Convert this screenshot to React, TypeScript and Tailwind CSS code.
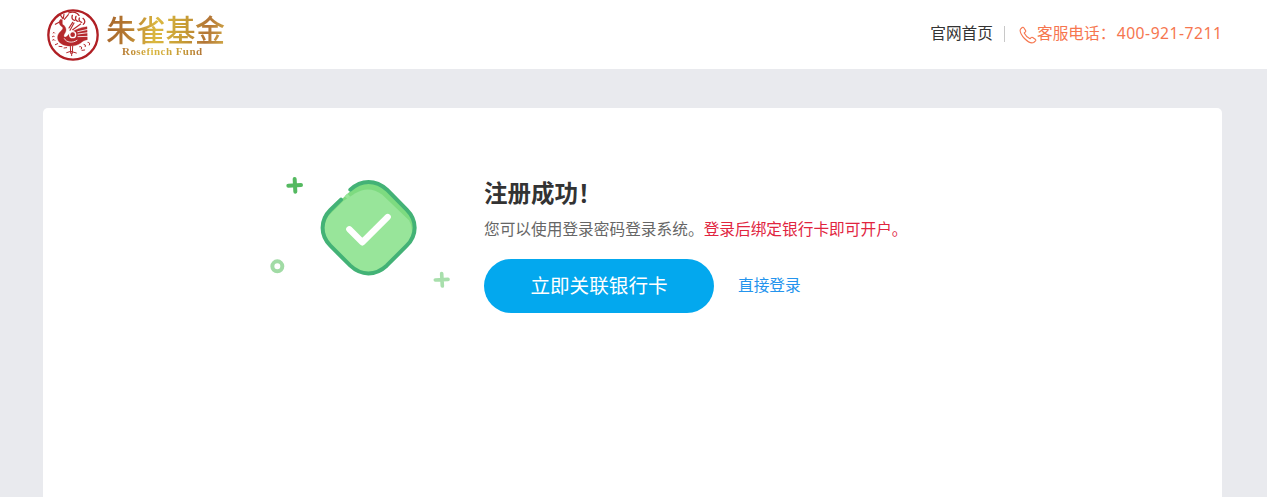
import React from 'react';

function Emblem() {
  return (
    <svg className="h-[62px] w-[64px] shrink-0" viewBox="0 0 192 186" fill="none" stroke="#b5282c" strokeLinecap="round" strokeLinejoin="round">
      <circle cx="99" cy="93" r="74" stroke="#b01f24" strokeWidth="7" />
      <path d="M62 46 C54 52 58 64 66 68 C73 73 64 79 58 86 C49 97 52 113 65 120 C80 129 108 128 122 117 C129 111 133 108 142 107 L141 68 C121 70 108 76 95 84 C87 88 83 98 77 99 C70 101 70 94 75 87 C82 76 76 67 67 60 L67 47 Z" fill="#b5282c" strokeWidth="1" />
      <circle cx="98" cy="92" r="9" stroke="#fff" strokeWidth="4" />
      <path d="M113 83 L144 76 M114 90 L144 86 M114 98 L144 97 M73 104 C79 116 98 118 111 109" stroke="#fff" strokeWidth="2.5" />
      <path d="M90 79 L102 57 M98 77 L122 60 M87 72 L98 55" strokeWidth="3.5" />
      <path d="M60 53 L46 61 M68 43 L60 31 M70 43 L72 30 M73 46 L85 32" strokeWidth="3.5" />
      <path d="M86 27 C99 21 112 26 117 34 M97 34 C94 42 97 48 104 49 M108 37 C104 45 108 51 114 52 M118 42 C115 49 120 54 125 55 M129 43 C136 49 136 56 130 61" strokeWidth="4" />
      <path d="M91 126 L92 148 M98 126 L97 148 M80 146 L92 142 L109 147 M95 147 V155" strokeWidth="3" />
      <path d="M39 87 q3 -5 5 0 M37 98 q4 -5 6 0 M38 108 q5 -4 7 1 M46 122 l7 -3 M57 127 l9 1 M72 132 l8 -1" strokeWidth="3" />
      <path d="M119 128 q9 -2 5 7 M132 121 q7 0 4 7 M144 115 q8 0 4 8 M126 139 l8 -1" strokeWidth="3" />
    </svg>
  );
}

function Logo() {
  return (
    <div className="flex h-[69px] items-center">
      <Emblem />
      <div className="ml-[2px] flex flex-col bg-[linear-gradient(100deg,#a6642b_0%,#b47730_18%,#dbb840_42%,#c69b35_65%,#b37536_82%,#d3ad47_100%)] bg-clip-text pt-px text-transparent">
        <span className="h-[32px] whitespace-nowrap font-['Noto_Sans_CJK_SC',sans-serif] text-[30px] font-medium leading-[30px] tracking-[-0.3px]">朱雀基金</span>
        <span className="h-[12px] whitespace-nowrap pl-[16px] font-['Liberation_Serif',serif] text-[11px] font-bold leading-[12px] tracking-[0.45px]">Rosefinch Fund</span>
      </div>
    </div>
  );
}

function SuccessArt() {
  return (
    <svg className="h-[135px] w-[200px] shrink-0" viewBox="0 0 600 405" fill="none" strokeLinecap="round" strokeLinejoin="round">
      <path d="M280 70 Q326 34 373 68 L447 141 Q480 189 447 238 L374 311 Q326 342 279 311 L205 237 Q173 189 205 141 Z" fill="#7edb80" />
      <path d="M250 108 L286 85 Q326 60 367 89 L447 166 Q466 196 444 238 L374 311 Q326 342 279 311 L205 237 Q180 200 204 154 Z" fill="#98e59a" />
      <path d="M271 74 C304 43 347 43 381 74 L440 134 C472 166 472 210 440 242 L380 302 C346 333 304 333 271 302 L211 242 C180 210 180 166 211 135 L243 104" stroke="#43b276" strokeWidth="12" />
      <path d="M258 98 L266 90" stroke="#98e59a" strokeWidth="12" strokeLinecap="butt" />
      <path d="M268 193 L307 232 L383 156" stroke="#fff" strokeWidth="19" />
      <path d="M104 42 L106 80 M85 62 L123 60" stroke="#54b960" strokeWidth="12" />
      <circle cx="52" cy="304" r="15" stroke="#a1dba5" strokeWidth="12" />
      <path d="M545 326 L547 363 M526 345 L564 343" stroke="#a8dfac" strokeWidth="11" />
    </svg>
  );
}

function PhoneIcon() {
  return (
    <svg className="mt-[4px] h-[18px] w-[18px] shrink-0" viewBox="0 0 18 18" fill="none" stroke="#f6764f" strokeWidth="1.1" strokeLinejoin="round">
      <path d="M3.2 1.5 1.5 3.2C.1 5.4 3 10 5.5 12.5 8 15 12.2 17.8 14.7 16.5L16.5 14.8C17 14.2 16.8 13.7 16.2 13.2L13.7 11.5C13.1 11.1 12.6 11.1 12.1 11.6L11 12.8C8.7 11.7 6.4 9.4 5.2 7L6.4 5.9C6.9 5.4 6.9 5 6.5 4.4L4.8 1.8C4.3 1.1 3.8 1 3.2 1.5Z" />
    </svg>
  );
}

export default function App() {
  return (
    <div className="flex h-[497px] flex-col overflow-hidden bg-[#e9eaee] font-['Noto_Sans','Noto_Sans_CJK_SC',sans-serif] text-[#333]">
      <header className="flex h-[69px] shrink-0 items-center justify-between bg-white pl-[40px] pr-[45px]">
        <Logo />
        <div className="flex items-center pb-[4px] text-[15.7px] leading-6">
          <a href="#" className="whitespace-nowrap">官网首页</a>
          <span className="ml-[11px] mr-[14px] mt-[2px] h-4 w-px bg-[#c8c8c8]" />
          <PhoneIcon />
          <div className="flex w-[185px] justify-between whitespace-nowrap text-[#f6764f]">
            <span>客服电话：</span>
            <span className="-mr-[0.5px] tracking-[0.5px]">400-921-7211</span>
          </div>
        </div>
      </header>
      <main className="ml-[43px] mr-[45px] mt-[39px] flex flex-1 items-start rounded-t-[5px] bg-white pl-[217px] pt-[57px]">
        <SuccessArt />
        <section className="ml-[24px] pt-[11px]">
          <h1 className="text-[23.5px] font-bold leading-[34px]">注册成功！</h1>
          <p className="mt-[7px] whitespace-nowrap text-[15.7px] leading-6 text-[#666]">
            您可以使用登录密码登录系统。<span className="text-[#e1253f]">登录后绑定银行卡即可开户。</span>
          </p>
          <div className="mt-[18px] flex items-center">
            <button className="h-[54px] w-[230px] rounded-full bg-[#03a8ee] text-[19.6px] text-white">立即关联银行卡</button>
            <a href="#" className="ml-[24px] text-[15.7px] text-[#2494ed]">直接登录</a>
          </div>
        </section>
      </main>
    </div>
  );
}
